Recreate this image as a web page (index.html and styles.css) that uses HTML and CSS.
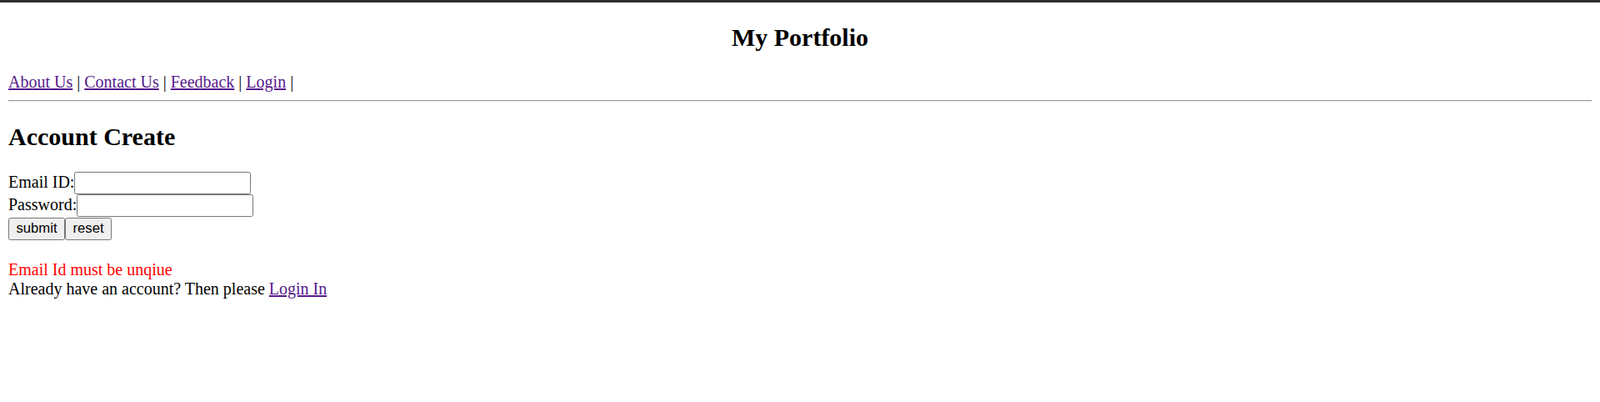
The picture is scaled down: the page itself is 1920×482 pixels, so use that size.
FILE: index.html
```html
<!DOCTYPE html>
<html lang="en">
<head>
<meta charset="utf-8">
<title>My Portfolio</title>
<link rel="stylesheet" href="styles.css">
</head>
<body class="page">
<div class="topbar"></div>
<h2 class="title">My Portfolio</h2>
<div class="nav"><a class="link" href="#about">About Us</a> | <a class="link" href="#contact">Contact Us</a> | <a class="link" href="#feedback">Feedback</a> | <a class="link" href="#login">Login</a> |</div>
<hr class="rule">
<h2 class="heading">Account Create</h2>
<form class="form">
  <div class="row">Email ID:<input class="field" type="text"></div>
  <div class="row">Password:<input class="field" type="password"></div>
  <div class="row"><button class="btn" type="submit">submit</button><button class="btn" type="reset">reset</button></div>
</form>
<p class="error">Email Id must be unqiue</p>
<div class="note">Already have an account? Then please <a class="link" href="#login">Login In</a></div>
</body>
</html>
```
FILE: styles.css
```css
.page {
  margin: 10px;
  font-family: "Liberation Serif", "Times New Roman", serif;
  font-size: 20px;
  color: #000;
  background: #fff;
}
.topbar {
  position: fixed;
  top: 0;
  left: 0;
  right: 0;
  height: 3px;
  background: #2e2e2e;
}
.title {
  text-align: center;
  font-size: 30px;
  font-weight: bold;
  margin: 18px 0 24.9px;
}
.nav {
  line-height: 23px;
}
.link {
  color: #551a8b;
  text-decoration: underline;
}
.rule {
  margin: 10px 0;
  height: 0;
  border: 0;
  border-top: 1px solid #9a9a9a;
  border-bottom: 1px solid #ededed;
}
.heading {
  font-size: 30px;
  font-weight: bold;
  margin: 24.9px 0;
}
.form {
  margin: 0;
}
.row {
  height: 27.5px;
  line-height: 23px;
}
.field {
  box-sizing: border-box;
  width: 212px;
  height: 27px;
  margin: 0;
  padding: 1px 2.5px;
  border: 1.25px solid #767676;
  border-radius: 2.5px;
  font-family: "Liberation Sans", Arial, sans-serif;
  font-size: 16.67px;
  background: #fff;
  vertical-align: baseline;
}
.btn {
  box-sizing: border-box;
  height: 27px;
  margin: 0;
  padding: 1px 8.5px;
  border: 1.25px solid #767676;
  border-radius: 2.5px;
  background: #efefef;
  color: #000;
  font-family: "Liberation Sans", Arial, sans-serif;
  font-size: 16.67px;
}
.error {
  color: #ff0000;
  margin: 24px 0 0;
  line-height: 23px;
}
.note {
  line-height: 23px;
}
```
